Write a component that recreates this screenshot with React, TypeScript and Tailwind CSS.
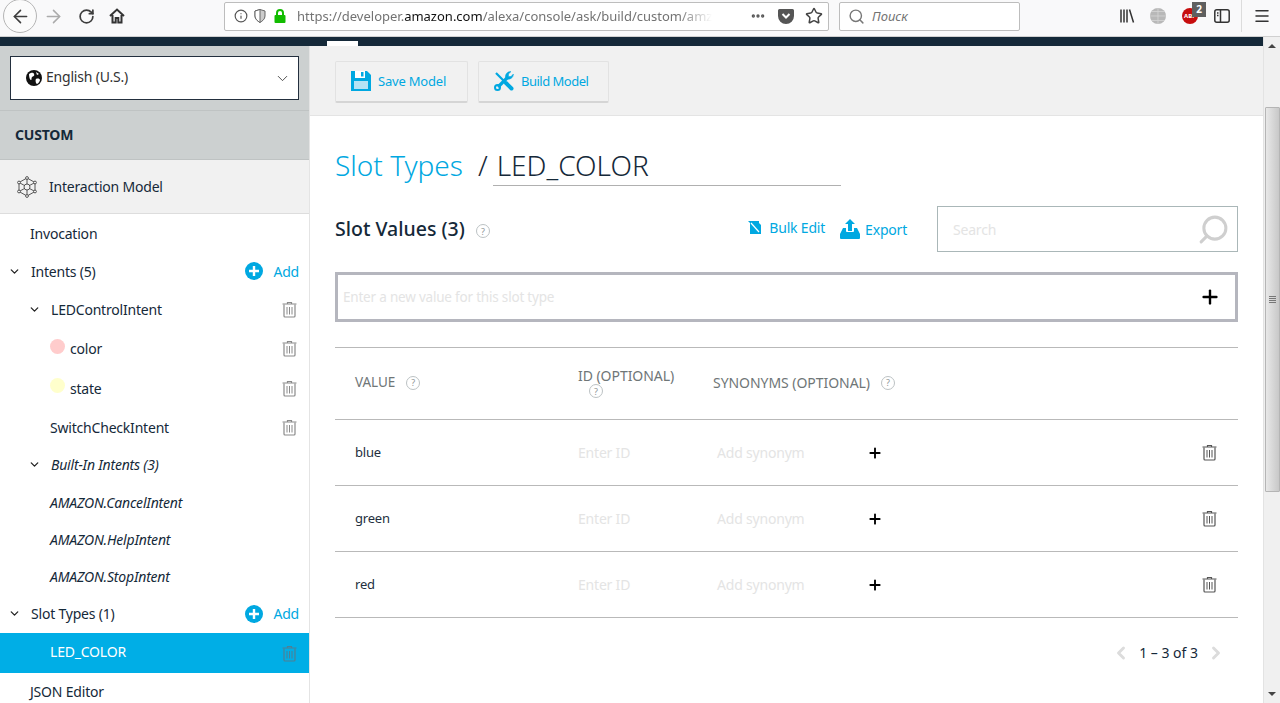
import { ArrowLeft, ArrowRight, RotateCw, ChevronDown, ChevronLeft, ChevronRight, Search, Star, Info, Menu, Plus, Ellipsis } from 'lucide-react';

const Trash = ({ className }: { className: string }) => (
  <svg width="15" height="17" viewBox="0 0 15 17" fill="none" stroke="currentColor" className={className}>
    <path d="M5.500 2.500v-1h4v1M.5 3h14" strokeWidth="1.200" />
    <path d="M2 3.500v11.500a1 1 0 0 0 1 1h9a1 1 0 0 0 1-1V3.500" strokeWidth="1.200" />
    <path d="M5 6v7.500M7.500 6v7.500M10 6v7.500" strokeWidth="1" />
  </svg>
);

const Help = () => (
  <span className="inline-flex h-[14px] w-[14px] items-center justify-center rounded-full border border-[#bcc2c4] text-[9px] leading-none text-[#8f9698]">?</span>
);

const AddLink = () => (
  <div className="ml-auto flex items-center gap-[10px] text-[#00a8e1]">
    <svg width="18" height="18" viewBox="0 0 18 18">
      <circle cx="9" cy="9" r="9" fill="#00a8e1" />
      <path d="M9 4v10M4 9h10" stroke="#fff" strokeWidth="2.400" />
    </svg>
    <span>Add</span>
  </div>
);

const Caret = () => <ChevronDown size={13} strokeWidth={2.400} className="text-[#222]" />;

const Row = ({ name }: { name: string }) => (
  <div className="flex h-[66px] items-center border-b border-[#b9b9b9] pl-[20px] pr-[21px]">
    <div className="mt-[1px] w-[223px] text-[13px] text-[#232f3e]">{name}</div>
    <div className="w-[139px] text-[#e4e4e4]">Enter ID</div>
    <div className="w-[150px] text-[#e4e4e4]">Add synonym</div>
    <Plus size={16} strokeWidth={2.800} className="text-black" />
    <Trash className="ml-auto text-[#555]" />
  </div>
);

export default function App() {
  return (
    <div className="flex h-[703px] w-[1280px] flex-col overflow-hidden bg-white font-['Noto_Sans',sans-serif] text-[14px] tracking-[-0.2px] text-[#152939]">
      {/* Browser toolbar */}
      <div className="flex h-[37px] shrink-0 items-center border-b border-[#d0d0d0] bg-[#f9f9fa] pb-[4px] tracking-normal text-[#3d3d3d]">
        <div className="ml-[3px] flex h-[34px] w-[34px] shrink-0 items-center justify-center rounded-full border border-[#b5b5b5] bg-[#fbfbfb]">
          <ArrowLeft size={21} strokeWidth={1.800} />
        </div>
        <ArrowRight size={21} strokeWidth={1.800} className="ml-[6px] text-[#ababab]" />
        <RotateCw size={17} strokeWidth={2.400} className="ml-[14px]" />
        <svg width="16" height="16" viewBox="0 0 16 16" className="ml-[14px] text-[#333]">
          <path d="M1 8 8 1.500 15 8M3.500 7v7.500h3.200V10h2.600v4.500h3.200V7" fill="none" stroke="currentColor" strokeWidth="2" />
        </svg>
        <div className="ml-[99px] flex h-[29px] w-[605px] items-center rounded-[2px] border border-[#bdbdbd] bg-white pl-[9px] pr-[5px]">
          <Info size={14} className="text-[#555]" />
          <svg width="12" height="14" viewBox="0 0 12 14" className="ml-[6px]">
            <path d="M6 .5 11 2v5c0 3-2.500 5-5 6.500C3.500 12 1 10 1 7V2Z" fill="#ccc" stroke="#666" />
            <path d="M6 .5V13.500C3.500 12 1 10 1 7V2Z" fill="#fff" stroke="#666" />
          </svg>
          <svg width="12" height="14" viewBox="0 0 12 14" className="ml-[8px]">
            <path d="M3 6V4a3 3 0 0 1 6 0v2" fill="none" stroke="#12bc00" strokeWidth="2" />
            <rect x="0.500" y="6" width="11" height="8" rx="1" fill="#12bc00" />
          </svg>
          <div className="ml-[11px] mt-[1px] w-[415px] whitespace-nowrap text-[13px] text-[#737373] [mask-image:linear-gradient(to_right,black_92%,transparent)]">
            https://developer.<span className="text-[#111]">amazon.com</span>/alexa/console/ask/build/custom/amz
          </div>
          <Ellipsis size={16} strokeWidth={3} className="ml-auto text-[#555]" />
          <svg width="16" height="15" viewBox="0 0 16 15" className="ml-[12px]">
            <path d="M1.500 0h13A1.500 1.500 0 0 1 16 1.500V7a8 8 0 0 1-16 0V1.500A1.500 1.500 0 0 1 1.500 0Z" fill="#555" />
            <path d="m4.500 5 3.500 3.500L11.500 5" fill="none" stroke="#fff" strokeWidth="2" />
          </svg>
          <Star size={18} strokeWidth={2} className="ml-[11px] text-[#444]" />
        </div>
        <div className="ml-[10px] flex h-[29px] w-[181px] items-center gap-[7px] rounded-[2px] border border-[#bdbdbd] bg-white pl-[8px]">
          <Search size={17} className="text-[#777]" />
          <span className="mt-[1px] text-[13px] italic text-[#737373]">Поиск</span>
        </div>
        <svg width="16" height="16" viewBox="0 0 16 16" className="ml-[99px]" stroke="#333" strokeWidth="1.500">
          <path d="M2 1.500v13M5 1.500v13M8 1.500v13M10.500 1.500l4 13" />
        </svg>
        <svg width="16" height="16" viewBox="0 0 16 16" className="ml-[15px]">
          <circle cx="8" cy="8" r="8" fill="#b8b8b8" />
          <path d="M0 8h16M8 0v16M2 3.500h12M2 12.500h12" stroke="#d5d5d5" strokeWidth="0.800" />
        </svg>
        <div className="relative ml-[16px] flex h-[16px] w-[16px] items-center justify-center rounded-full bg-[#c70d0d] text-[6px] font-bold text-white">
          ABP
          <span className="absolute left-[10px] top-[-6px] flex h-[15px] w-[14px] items-center justify-center bg-[#5f5f5f] text-[10px] font-bold">2</span>
        </div>
        <svg width="16" height="14" viewBox="0 0 16 14" className="ml-[16px]" fill="none" stroke="#333" strokeWidth="1.500">
          <rect x="0.800" y="0.800" width="14.400" height="12.400" rx="2" />
          <path d="M6.500 1v12M3 4h1.500M3 6.500h1.500" />
        </svg>
        <div className="ml-[11px] h-[32px] w-px bg-[#dcdcdc]" />
        <Menu size={18} strokeWidth={2} className="ml-[11px] text-[#333]" />
      </div>

      <div className="flex min-h-0 flex-1">
        <div className="flex min-w-0 flex-1 flex-col">
          {/* Dark top strip */}
          <div className="flex h-[9px] shrink-0 items-end bg-[#152939] pl-[327px]">
            <div className="h-[5px] w-[31px] bg-white" />
          </div>

          <div className="flex min-h-0 flex-1">
            {/* Sidebar */}
            <aside className="flex w-[310px] shrink-0 flex-col border-r border-[#e4e4e4] text-[#152939] *:shrink-0">
              <div className="flex h-[64px] items-start bg-[#ccd0d0] pl-[10px] pr-[10px] pt-[10px]">
                <div className="flex h-[44px] w-full items-center border border-[#232f3e] bg-white pl-[15px] pr-[7px] text-[#333]">
                  <svg width="16" height="16" viewBox="0 0 16 16" className="mb-[1px]">
                    <circle cx="8" cy="8" r="8" fill="#111" />
                    <path d="M3 4c2-1 4-2 5 0s-1 2-2 3 0 3-1 3-2-3-2-6ZM10 9c2-1 4 0 4 1s-2 4-3 4-2-4-1-5ZM10 2l3 2-2 1Z" fill="#fff" />
                  </svg>
                  <span className="mb-[3px] ml-[4px]">English (U.S.)</span>
                  <ChevronDown size={17} strokeWidth={1.300} className="ml-auto text-[#444]" />
                </div>
              </div>
              <div className="flex h-[50px] items-center border-y border-[#bfc3c3] bg-[#ccd0d0] pb-[2px] pl-[15px] font-bold">CUSTOM</div>
              <div className="flex h-[54px] items-center border-b border-[#dddddd] bg-[#f1f1f1] pl-[17px]">
                <svg width="20" height="22" viewBox="0 0 20 22" fill="none" stroke="#444" strokeWidth="0.900">
                  <path d="M10 2 18 6.500v9L10 20l-8-4.500v-9Z" />
                  <circle cx="10" cy="11" r="3" />
                  <path d="M10 2v6M10 14v6M2 6.500 7.500 9.500M18 6.500 12.500 9.500M2 15.500l5.500-3M18 15.500l-5.500-3" />
                  <circle cx="10" cy="2" r="1.400" fill="#fff" />
                  <circle cx="10" cy="20" r="1.400" fill="#fff" />
                  <circle cx="2" cy="6.500" r="1.400" fill="#fff" />
                  <circle cx="18" cy="6.500" r="1.400" fill="#fff" />
                  <circle cx="2" cy="15.500" r="1.400" fill="#fff" />
                  <circle cx="18" cy="15.500" r="1.400" fill="#fff" />
                </svg>
                <span className="ml-[12px]">Interaction Model</span>
              </div>

              <div className="flex h-[39px] items-center pl-[30px]">Invocation</div>
              <div className="flex h-[37px] items-center pb-[1px] pl-[8px] pr-[10px]">
                <Caret />
                <span className="ml-[10px]">Intents (5)</span>
                <AddLink />
              </div>
              <div className="flex h-[38px] items-center pl-[28px] pr-[12px]">
                <Caret />
                <span className="ml-[10px]">LEDControlIntent</span>
                <Trash className="ml-auto text-[#8a8a8a]" />
              </div>
              <div className="flex h-[41px] items-center pl-[50px] pr-[12px]">
                <span className="mb-[5px] h-[15px] w-[15px] rounded-full bg-[#ffcccc]" />
                <span className="ml-[5px]">color</span>
                <Trash className="ml-auto text-[#8a8a8a]" />
              </div>
              <div className="flex h-[40px] items-center pb-[2px] pl-[50px] pr-[12px]">
                <span className="mb-[5px] h-[15px] w-[15px] rounded-full bg-[#ffffcc]" />
                <span className="ml-[5px]">state</span>
                <Trash className="ml-auto text-[#8a8a8a]" />
              </div>
              <div className="flex h-[37px] items-center pb-[1px] pl-[50px] pr-[12px]">
                SwitchCheckIntent
                <Trash className="ml-auto text-[#8a8a8a]" />
              </div>
              <div className="flex h-[38px] items-center pb-[2px] pl-[28px] italic">
                <Caret />
                <span className="ml-[10px]">Built-In Intents (3)</span>
              </div>
              <div className="flex h-[37px] items-center pb-[1px] pl-[50px] italic">AMAZON.CancelIntent</div>
              <div className="flex h-[37px] items-center pb-[1px] pl-[50px] italic">AMAZON.HelpIntent</div>
              <div className="flex h-[37px] items-center pb-[1px] pl-[50px] italic">AMAZON.StopIntent</div>
              <div className="flex h-[38px] items-center pb-[1px] pl-[8px] pr-[10px]">
                <Caret />
                <span className="ml-[10px]">Slot Types (1)</span>
                <AddLink />
              </div>
              <div className="flex h-[40px] items-center bg-[#00aee6] pl-[50px] pr-[12px] text-white">
                <span className="mb-[3px]">LED_COLOR</span>
                <Trash className="ml-auto text-[#4f7f94]" />
              </div>
              <div className="flex h-[37px] items-center pb-[1px] pl-[30px]">JSON Editor</div>
            </aside>

            {/* Main content */}
            <main className="flex min-w-0 flex-1 flex-col">
              <div className="flex h-[70px] shrink-0 items-center gap-[10px] border-b border-[#e4e4e4] bg-[#f1f1f1] pl-[25px] text-[13px]">
                <div className="mt-[2px] flex h-[42px] w-[133px] items-center rounded-[2px] border border-[#e2e2e2] border-b-2 border-b-[#d5d5d5] pl-[15px] text-[#00a8e1]">
                  <svg width="20" height="20" viewBox="0 0 20 20">
                    <path d="M0 0h16l4 4v16H0Z" fill="#00a8e1" />
                    <rect x="4" y="0" width="10" height="7" fill="#fff" />
                    <rect x="10" y="1" width="2.500" height="4.500" fill="#00a8e1" />
                    <rect x="3" y="10" width="14" height="8" fill="#b5e3f4" />
                  </svg>
                  <span className="ml-[7px] mt-[2px]">Save Model</span>
                </div>
                <div className="mt-[2px] flex h-[42px] w-[131px] items-center rounded-[2px] border border-[#e2e2e2] border-b-2 border-b-[#d5d5d5] pl-[15px] text-[#00a8e1]">
                  <svg width="20" height="20" viewBox="0 0 20 20" fill="none" stroke="#00a8e1">
                    <path d="M2 2 11 11" strokeWidth="2.200" />
                    <path d="M12 12 17.500 17.500" strokeWidth="4" strokeLinecap="round" />
                    <path d="M14 6 4 16" strokeWidth="3.200" />
                    <circle cx="3.500" cy="16.500" r="2.500" strokeWidth="2" />
                    <path d="M17 .6 14.500 3v2.500H17L19.400 3a5 5 0 0 1-6.400 5L11.500 6.500A5 5 0 0 1 17 .6Z" fill="#00a8e1" strokeWidth="0.500" />
                  </svg>
                  <span className="ml-[7px] mt-[2px] tracking-[-0.5px]">Build Model</span>
                </div>
              </div>

              <div className="min-h-0 flex-1 px-[25px]">
                <div className="mt-[32px] flex h-[38px] items-end text-[28px] font-light leading-[34px] tracking-normal">
                  <h1 className="pb-[4px] text-[#00a8e1]">Slot Types</h1>
                  <span className="ml-[15px] pb-[4px] text-[#152939]">/</span>
                  <div className="ml-[5px] w-[348px] border-b border-[#b0b0b0] pb-[3px] pl-[4px] text-[#152939]">LED_COLOR</div>
                </div>

                <div className="mt-[20px] flex h-[46px] items-center">
                  <span className="text-[19.500px] font-medium tracking-normal text-[#152939]">Slot Values (3)</span>
                  <span className="ml-[11px] mt-[4px] flex"><Help /></span>
                  <div className="ml-auto flex items-center text-[#00a8e1]">
                    <svg width="13" height="13" viewBox="0 0 13 13" className="mb-[4px]">
                      <path d="M0 0h11v2l2 2v9H2V2Z" fill="#00a8e1" />
                      <path d="M3 2l8 9" stroke="#fff" strokeWidth="1.200" />
                    </svg>
                    <span className="mb-[4px] ml-[8px]">Bulk Edit</span>
                    <svg width="20" height="20" viewBox="0 0 20 20" className="ml-[15px]">
                      <path d="M10 0 15 5H12V12H8V5H5Z" fill="#00a8e1" />
                      <path d="M3 9h3v3q0 1 1 1h6q1 0 1-1V9h3l3 6v4q0 1-1 1H1q-1 0-1-1v-4Z" fill="#00a8e1" />
                    </svg>
                    <span className="ml-[5px]">Export</span>
                  </div>
                  <div className="ml-[30px] flex h-[46px] w-[301px] items-center border border-[#aab7b8] pl-[15px] pr-[7px] text-[#e4e4e4]">
                    <span>Search</span>
                    <Search size={33} strokeWidth={2.200} className="ml-auto -scale-x-100 text-[#cfcfcf]" />
                  </div>
                </div>

                <div className="mt-[20px] flex h-[50px] items-center border-[3px] border-[#b5b6be] pl-[5px] pr-[14px] text-[13.500px] text-[#e4e4e4]">
                  <span className="mt-[1px]">Enter a new value for this slot type</span>
                  <Plus size={22} strokeWidth={2.600} className="ml-auto text-black" />
                </div>

                <div className="mt-[25px] flex h-[73px] items-center border-y border-[#b9b9b9] pb-[2px] pl-[20px] tracking-[-0.05px] text-[#6f7677]">
                  <div className="flex w-[223px] items-center gap-[11px] text-[13.500px]">VALUE <Help /></div>
                  <div className="w-[135px]">
                    <div className="leading-[17px]">ID (OPTIONAL)</div>
                    <div className="ml-[11px] flex"><Help /></div>
                  </div>
                  <div className="flex items-center gap-[11px]">SYNONYMS (OPTIONAL) <Help /></div>
                </div>
                <Row name="blue" />
                <Row name="green" />
                <Row name="red" />

                <div className="mt-[24px] flex items-center justify-end pr-[12px]">
                  <ChevronLeft size={20} strokeWidth={3.500} className="text-[#dcdcdc]" />
                  <span className="mx-[8px] tracking-normal text-[#152939]">1 – 3 of 3</span>
                  <ChevronRight size={20} strokeWidth={3.500} className="text-[#dcdcdc]" />
                </div>
              </div>
            </main>
          </div>
        </div>

        {/* Page scrollbar */}
        <div className="flex w-[17px] shrink-0 flex-col items-center border-l border-[#e3e3e3] bg-[#f0f0f0]">
          <span className="mt-[7px] h-0 w-0 border-x-[4px] border-b-[4px] border-x-transparent border-b-[#444]" />
          <div className="mt-[59px] flex h-[385px] w-[15px] items-center justify-center rounded-[1px] border border-[#b5b5b5] bg-gradient-to-r from-[#e8e8e8] to-[#c8c8c8]">
            <div className="flex flex-col gap-[1px]">
              <span className="h-px w-[7px] bg-[#777]" />
              <span className="h-px w-[7px] bg-[#777]" />
              <span className="h-px w-[7px] bg-[#777]" />
              <span className="h-px w-[7px] bg-[#777]" />
            </div>
          </div>
          <span className="mb-[7px] mt-auto h-0 w-0 border-x-[4px] border-t-[4px] border-x-transparent border-t-[#444]" />
        </div>
      </div>
    </div>
  );
}
